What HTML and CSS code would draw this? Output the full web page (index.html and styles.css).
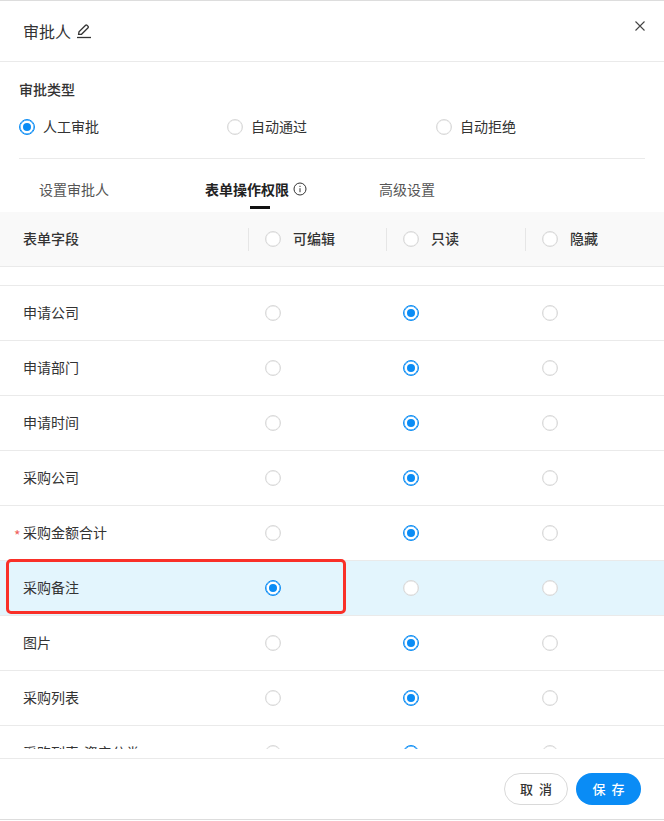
FILE: index.html
```html
<!DOCTYPE html>
<html lang="zh-CN">
  <head>
    <meta charset="UTF-8" />
    <title>审批人</title>
    <link rel="stylesheet" href="styles.css">
  </head>
  <body>
    <div class="drawer">
      <!-- 标题 -->
      <div class="drawer-head">
        <span class="drawer-title">审批人</span>
        <svg class="edit-icon" width="16" height="16" viewBox="0 0 16 16" fill="none" stroke="#333" stroke-width="1.300">
          <path d="M2.600 11.400 3 8.800 9.600 2.200a.9.9 0 0 1 1.300 0l1.200 1.200a.9.9 0 0 1 0 1.300L5.500 11.300z" />
          <path d="M1 14.500H15" />
        </svg>
        <svg class="close-icon" width="12" height="12" viewBox="0 0 12 12" fill="none" stroke="#444" stroke-width="1.100">
          <path d="M1.500 1.500 10.500 10.500M10.500 1.500 1.500 10.500" />
        </svg>
      </div>

      <!-- 审批类型 -->
      <div class="type-box">
        <div class="type-label">审批类型</div>
        <div class="type-options">
          <label class="type-option"><span class="radio checked"></span><span class="text">人工审批</span></label>
          <label class="type-option"><span class="radio"></span><span class="text">自动通过</span></label>
          <label class="type-option"><span class="radio"></span><span class="text">自动拒绝</span></label>
        </div>
      </div>

      <!-- 页签 -->
      <div class="tabs">
        <div class="tab tab-first">设置审批人</div>
        <div class="tab tab-active">
          表单操作权限
          <svg class="info-icon" width="14" height="14" viewBox="0 0 14 14" fill="none" stroke="#333" stroke-width="1">
            <circle cx="7" cy="7" r="6" />
            <path d="M7 6.200V10.200M7 3.800V5" />
          </svg>
        </div>
        <div class="tab">高级设置</div>
      </div>

      <!-- 表单字段 -->
      <div class="table-head row-grid">
        <div class="cell-name">表单字段</div>
        <div class="cell-head"><span class="radio"></span><span class="text">可编辑</span></div>
        <div class="cell-head"><span class="radio"></span><span class="text">只读</span></div>
        <div class="cell-head"><span class="radio"></span><span class="text">隐藏</span></div>
      </div>

      <div class="table-body">
        <div class="row row-grid">
          <div class="cell-name">申请公司</div>
          <div class="cell"><span class="radio"></span></div>
          <div class="cell"><span class="radio checked"></span></div>
          <div class="cell"><span class="radio"></span></div>
        </div>
        <div class="row row-grid">
          <div class="cell-name">申请部门</div>
          <div class="cell"><span class="radio"></span></div>
          <div class="cell"><span class="radio checked"></span></div>
          <div class="cell"><span class="radio"></span></div>
        </div>
        <div class="row row-grid">
          <div class="cell-name">申请时间</div>
          <div class="cell"><span class="radio"></span></div>
          <div class="cell"><span class="radio checked"></span></div>
          <div class="cell"><span class="radio"></span></div>
        </div>
        <div class="row row-grid">
          <div class="cell-name">采购公司</div>
          <div class="cell"><span class="radio"></span></div>
          <div class="cell"><span class="radio checked"></span></div>
          <div class="cell"><span class="radio"></span></div>
        </div>
        <div class="row row-grid">
          <div class="cell-name required">采购金额合计</div>
          <div class="cell"><span class="radio"></span></div>
          <div class="cell"><span class="radio checked"></span></div>
          <div class="cell"><span class="radio"></span></div>
        </div>
        <div class="row row-grid row-selected">
          <div class="cell-name">采购备注</div>
          <div class="cell"><span class="radio checked"></span></div>
          <div class="cell"><span class="radio"></span></div>
          <div class="cell"><span class="radio"></span></div>
          <div class="red-mark"></div>
        </div>
        <div class="row row-grid">
          <div class="cell-name">图片</div>
          <div class="cell"><span class="radio"></span></div>
          <div class="cell"><span class="radio checked"></span></div>
          <div class="cell"><span class="radio"></span></div>
        </div>
        <div class="row row-grid">
          <div class="cell-name">采购列表</div>
          <div class="cell"><span class="radio"></span></div>
          <div class="cell"><span class="radio checked"></span></div>
          <div class="cell"><span class="radio"></span></div>
        </div>
        <div class="row row-grid">
          <div class="cell-name">采购列表-资产分类</div>
          <div class="cell"><span class="radio"></span></div>
          <div class="cell"><span class="radio checked"></span></div>
          <div class="cell"><span class="radio"></span></div>
        </div>
      </div>

      <!-- 底部按钮 -->
      <div class="drawer-foot">
        <button class="btn btn-cancel">取 消</button>
        <button class="btn btn-save">保 存</button>
      </div>
    </div>
  </body>
</html>
```

FILE: styles.css
```css
body {
  margin: 0;
  background: white;
  font-family: "Noto Sans CJK SC", "Noto Sans", sans-serif;
  font-size: 14px;
  color: #333;
}
.drawer {
  height: 820px;
  box-sizing: border-box;
  border-top: 1px solid #ddd;
  border-bottom: 1px solid #ddd;
  display: flex;
  flex-direction: column;
  overflow: hidden;
}
.drawer-head {
  position: relative;
  height: 60px;
  flex: none;
  display: flex;
  align-items: center;
  padding-left: 23px;
  border-bottom: 1px solid #eaeaea;
}
.drawer-title {
  font-size: 16px;
  line-height: 60px;
  margin-top: -1px;
}
.edit-icon {
  margin-left: 5px;
  margin-top: -1px;
}
.close-icon {
  position: absolute;
  top: 19px;
  right: 18px;
}
.type-box {
  flex: none;
  height: 96px;
  margin: 0 19px;
  border-bottom: 1px solid #eaeaea;
}
.type-label {
  margin-top: 17px;
  line-height: 20px;
  font-weight: 500;
}
.type-options {
  display: grid;
  grid-template-columns: 208px 209px 1fr;
  margin-top: 18px;
}
.type-option {
  display: flex;
  align-items: center;
  gap: 8px;
  line-height: 20px;
}
.text {
  position: relative;
  top: -1px;
}
.radio {
  display: inline-block;
  flex: none;
  position: relative;
  width: 16px;
  height: 16px;
  box-sizing: border-box;
  border: 1px solid #d9d9d9;
  border-radius: 50%;
  background: white;
  box-shadow: inset 0 0 0 0.4px #e2e2e2;
}
.radio.checked {
  border-color: #0a8cf5;
  box-shadow: inset 0 0 0 0.5px #0a8cf5;
}
.radio.checked::after {
  content: "";
  position: absolute;
  top: 3px;
  left: 3px;
  width: 8px;
  height: 8px;
  border-radius: 50%;
  background: #0a8cf5;
}
.tabs {
  flex: none;
  height: 53px;
  display: flex;
  padding-left: 39px;
}
.tab {
  position: relative;
  line-height: 20px;
  padding-top: 20px;
  color: #555;
}
.tab-first {
  margin-right: 96px;
}
.tab-active {
  display: flex;
  align-items: flex-start;
  gap: 4px;
  margin-right: 72px;
  font-weight: 700;
  color: #222;
}
.tab-active::after {
  content: "";
  position: absolute;
  left: 45px;
  bottom: 3px;
  width: 20px;
  height: 3px;
  background: #111;
}
.info-icon {
  margin-top: 3px;
}
.row-grid {
  display: grid;
  grid-template-columns: 248px 138px 139px 139px;
  align-items: center;
}
.table-head {
  flex: none;
  height: 54px;
  background: #f9f9f9;
  border-bottom: 1px solid #eaeaea;
  font-weight: 500;
}
.cell-name {
  padding-left: 23px;
  padding-bottom: 2px;
}
.cell-head {
  display: flex;
  align-items: center;
  gap: 12px;
  height: 23px;
  padding-left: 16px;
  border-left: 1px solid #e6e6e6;
}
.table-body {
  flex: none;
  height: 482px;
  padding-top: 18px;
  box-sizing: border-box;
  overflow: hidden;
}
.row {
  position: relative;
  height: 55px;
  box-sizing: border-box;
  border-top: 1px solid #eaeaea;
}
.row .cell {
  display: flex;
  padding-left: 17px;
}
.row-selected {
  background: #e3f5fd;
}
.required {
  position: relative;
}
.required::before {
  content: "*";
  position: absolute;
  left: 14px;
  top: 3px;
  color: #f0605a;
}
.red-mark {
  position: absolute;
  left: 6px;
  top: -2px;
  width: 340px;
  height: 55px;
  box-sizing: border-box;
  border: 3px solid #f93028;
  border-radius: 5px;
}
.drawer-foot {
  flex: 1;
  display: flex;
  justify-content: flex-end;
  align-items: flex-start;
  gap: 8px;
  padding: 14px 23px 0 0;
  border-top: 1px solid #eaeaea;
  margin-top: 9px;
}
.btn {
  height: 32px;
  padding: 0 0 2px;
  border-radius: 16px;
  font: inherit;
  font-size: 13px;
  font-weight: 500;
  word-spacing: 3px;
  cursor: pointer;
}
.btn-cancel {
  width: 64px;
  background: white;
  color: #333;
  border: 1px solid #d9d9d9;
}
.btn-save {
  width: 65px;
  background: #0a8cf5;
  color: white;
  border: none;
}
```
